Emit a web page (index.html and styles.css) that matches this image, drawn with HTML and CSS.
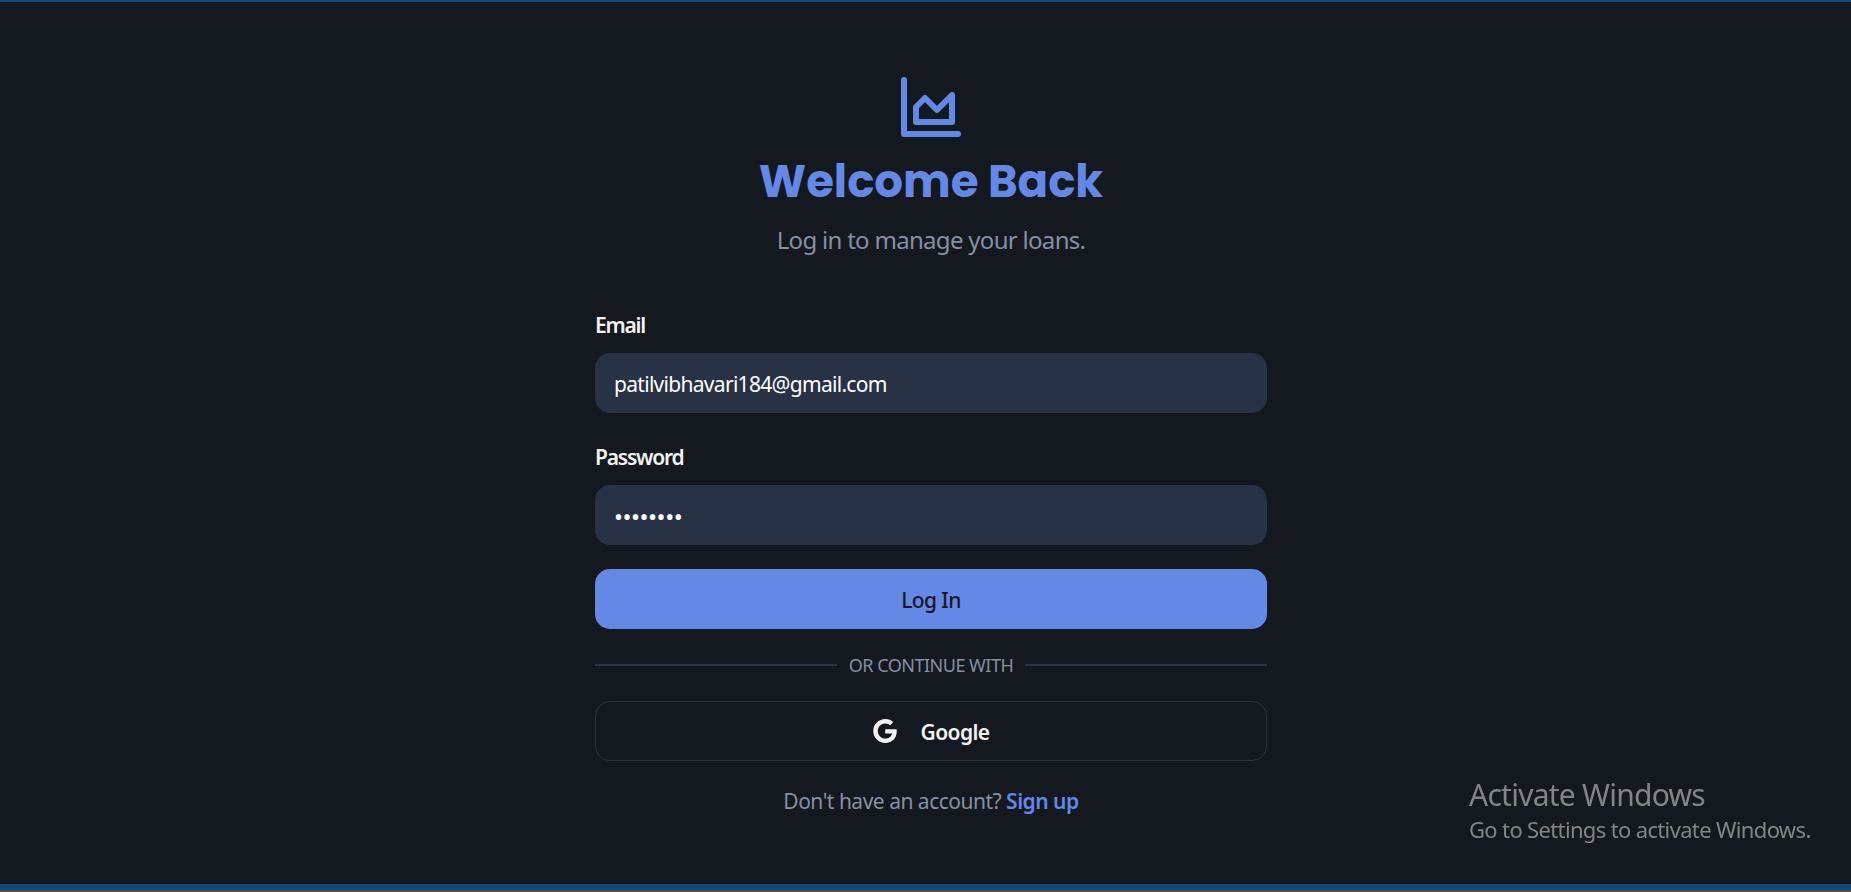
FILE: index.html
```html
<!DOCTYPE html>
<html lang="en">
<head>
  <meta charset="UTF-8">
  <title>Log In</title>
  <link rel="stylesheet" href="styles.css">
</head>
<body>

<main class="login">
  <header class="intro">
    <svg class="logo" viewBox="0 0 24 24" fill="none" stroke="currentColor" stroke-width="2" stroke-linecap="round" stroke-linejoin="round">
      <path d="M3 3v18h18"/>
      <path d="M7 12v5h12V8l-5 5-4-4Z"/>
    </svg>
    <h1>Welcome Back</h1>
    <p class="subtitle">Log in to manage your loans.</p>
  </header>

  <form class="form">
    <div class="field">
      <label for="email">Email</label>
      <input id="email" type="email" value="patilvibhavari184@gmail.com">
    </div>
    <div class="field field-password">
      <label for="password">Password</label>
      <input id="password" class="password" type="password" value="12345678">
    </div>
    <button class="btn btn-primary" type="button"><span>Log In</span></button>
    <div class="divider"><span>OR CONTINUE WITH</span></div>
    <button class="btn btn-outline" type="button">
      <svg class="google" viewBox="0 0 24 24" fill="currentColor">
        <path d="M12.24 10.285V14.4h6.806c-.275 1.765-2.056 5.174-6.806 5.174-4.095 0-7.439-3.389-7.439-7.574s3.345-7.574 7.439-7.574c2.33 0 3.891.989 4.785 1.849l3.254-3.138C18.189 1.186 15.479 0 12.24 0c-6.635 0-12 5.365-12 12s5.365 12 12 12c6.926 0 11.52-4.869 11.52-11.726 0-.788-.085-1.39-.189-1.989H12.24z"/>
      </svg>
      <span>Google</span>
    </button>
  </form>

  <p class="signup">Don't have an account? <a href="#">Sign up</a></p>
</main>

<aside class="watermark">
  <p class="watermark-title">Activate Windows</p>
  <p class="watermark-text">Go to Settings to activate Windows.</p>
</aside>

</body>
</html>
```
FILE: styles.css
```css
* { box-sizing: border-box; }
body {
  margin: 0;
  height: 892px;
  overflow: hidden;
  background: #14191f;
  border-top: 2px solid #0b4a7a;
  color: #f2f2f2;
  font-family: "Segoe UI", "Noto Sans", sans-serif;
  font-size: 21px;
  letter-spacing: -0.7px;
}
body::after {
  content: "";
  position: fixed;
  left: 0;
  right: 0;
  bottom: 0;
  height: 6px;
  background: #0b4a7a;
  border-bottom: 2px solid #504a4c;
}
h1, p { margin: 0; }
.login {
  width: 672px;
  margin-left: 595px;
  padding-top: 69px;
}
.intro {
  display: flex;
  flex-direction: column;
  align-items: center;
}
.logo {
  width: 72px;
  height: 72px;
  color: #6488e6;
}
h1 {
  margin-top: 12px;
  color: #6488e6;
  font-family: Poppins, Inter, sans-serif;
  font-size: 45px;
  font-weight: 700;
  line-height: 54px;
  letter-spacing: normal;
  white-space: nowrap;
}
.subtitle {
  margin-top: 13px;
  color: #868fa3;
  font-size: 24px;
  line-height: 36px;
}
.form {
  display: flex;
  flex-direction: column;
  gap: 24px;
  margin-top: 51px;
}
.field {
  display: flex;
  flex-direction: column;
  gap: 12px;
}
.field-password {
  margin-top: 4px;
}
label {
  align-self: flex-start;
  font-weight: 600;
  line-height: 32px;
  letter-spacing: -1.2px;
}
input {
  width: 100%;
  height: 60px;
  padding: 2px 19px 0;
  border: none;
  border-radius: 15px;
  outline: none;
  background: #273244;
  color: #fff;
  font: inherit;
  letter-spacing: -0.7px;
}
.password {
  font-size: 24px;
  letter-spacing: -0.5px;
}
.btn {
  display: flex;
  justify-content: center;
  align-items: center;
  height: 60px;
  padding: 0;
  border: none;
  border-radius: 15px;
  font: inherit;
  font-weight: 500;
  letter-spacing: -0.6px;
}
.btn span {
  padding-top: 2px;
}
.btn-primary {
  background: #6488e6;
  color: #14191f;
}
.divider {
  display: flex;
  align-items: center;
  gap: 12px;
  height: 24px;
  color: #868fa3;
  font-size: 18px;
  letter-spacing: -0.5px;
}
.divider::before,
.divider::after {
  content: "";
  flex: 1;
  height: 2px;
  background: #2b3345;
}
.btn-outline {
  gap: 24px;
  border: 1px solid #2b3345;
  background: transparent;
  color: #f2f2f2;
  font-weight: 600;
}
.google {
  width: 24px;
  height: 24px;
}
.signup {
  margin-top: 24px;
  color: #868fa3;
  line-height: 32px;
  text-align: center;
  letter-spacing: -0.5px;
}
.signup a {
  color: #6488e6;
  font-weight: 600;
  text-decoration: none;
}
.watermark {
  position: fixed;
  left: 1469px;
  top: 775px;
  color: #838485;
  white-space: nowrap;
}
.watermark-title {
  font-size: 30px;
  line-height: 40px;
  letter-spacing: -0.75px;
}
.watermark-text {
  font-size: 22px;
  line-height: 28px;
  letter-spacing: -0.65px;
}
```
